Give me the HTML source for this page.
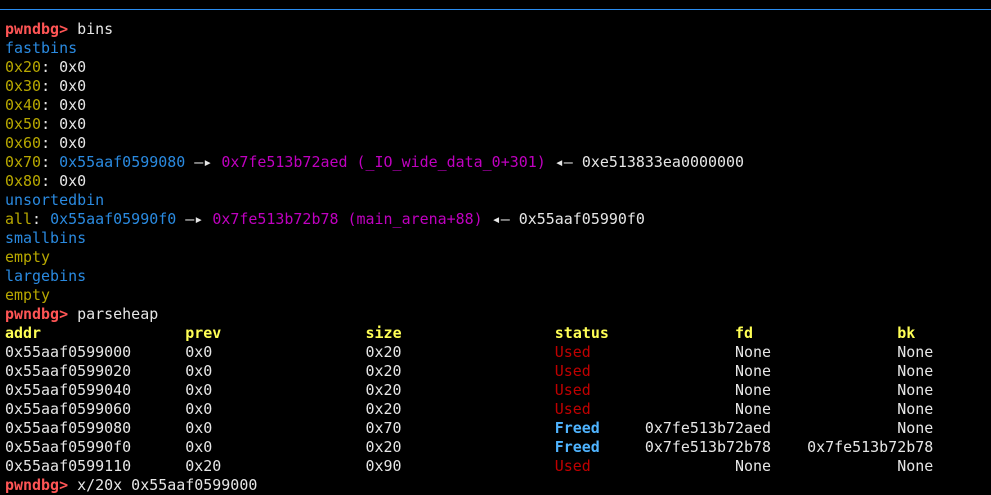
<!DOCTYPE html>
<html><head><meta charset="utf-8"><style>
html,body{margin:0;padding:0;background:#000;width:991px;height:492px;overflow:hidden}
.bar{position:absolute;left:0;top:9px;width:991px;height:1px;background:#2a8cf0}
pre{position:absolute;left:5px;top:20px;margin:0;font-family:"DejaVu Sans Mono","Liberation Mono",monospace;font-size:14.97px;line-height:19px;color:#e6e6e6;white-space:pre}
.p{color:#ff5555;font-weight:bold}
.b{color:#2a8ae0}
.y{color:#b8a800}
.m{color:#c000c0}
.h{color:#ffff55;font-weight:bold}
.u{color:#c00000}
.f{color:#4fb4ff;font-weight:bold}
</style></head><body>
<div class="bar"></div>
<pre><span class="p">pwndbg&gt;</span> bins
<span class="b">fastbins</span>
<span class="y">0x20</span>: 0x0
<span class="y">0x30</span>: 0x0
<span class="y">0x40</span>: 0x0
<span class="y">0x50</span>: 0x0
<span class="y">0x60</span>: 0x0
<span class="y">0x70</span>: <span class="b">0x55aaf0599080</span> —▸ <span class="m">0x7fe513b72aed (_IO_wide_data_0+301)</span> ◂— 0xe513833ea0000000
<span class="y">0x80</span>: 0x0
<span class="b">unsortedbin</span>
<span class="y">all</span>: <span class="b">0x55aaf05990f0</span> —▸ <span class="m">0x7fe513b72b78 (main_arena+88)</span> ◂— 0x55aaf05990f0
<span class="b">smallbins</span>
<span class="y">empty</span>
<span class="b">largebins</span>
<span class="y">empty</span>
<span class="p">pwndbg&gt;</span> parseheap
<span class="h">addr</span>                <span class="h">prev</span>                <span class="h">size</span>                 <span class="h">status</span>              <span class="h">fd</span>                <span class="h">bk</span>
0x55aaf0599000      0x0                 0x20                 <span class="u">Used</span>                None              None
0x55aaf0599020      0x0                 0x20                 <span class="u">Used</span>                None              None
0x55aaf0599040      0x0                 0x20                 <span class="u">Used</span>                None              None
0x55aaf0599060      0x0                 0x20                 <span class="u">Used</span>                None              None
0x55aaf0599080      0x0                 0x70                 <span class="f">Freed</span>     0x7fe513b72aed              None
0x55aaf05990f0      0x0                 0x20                 <span class="f">Freed</span>     0x7fe513b72b78    0x7fe513b72b78
0x55aaf0599110      0x20                0x90                 <span class="u">Used</span>                None              None
<span class="p">pwndbg&gt;</span> x/20x 0x55aaf0599000</pre>
</body></html>
